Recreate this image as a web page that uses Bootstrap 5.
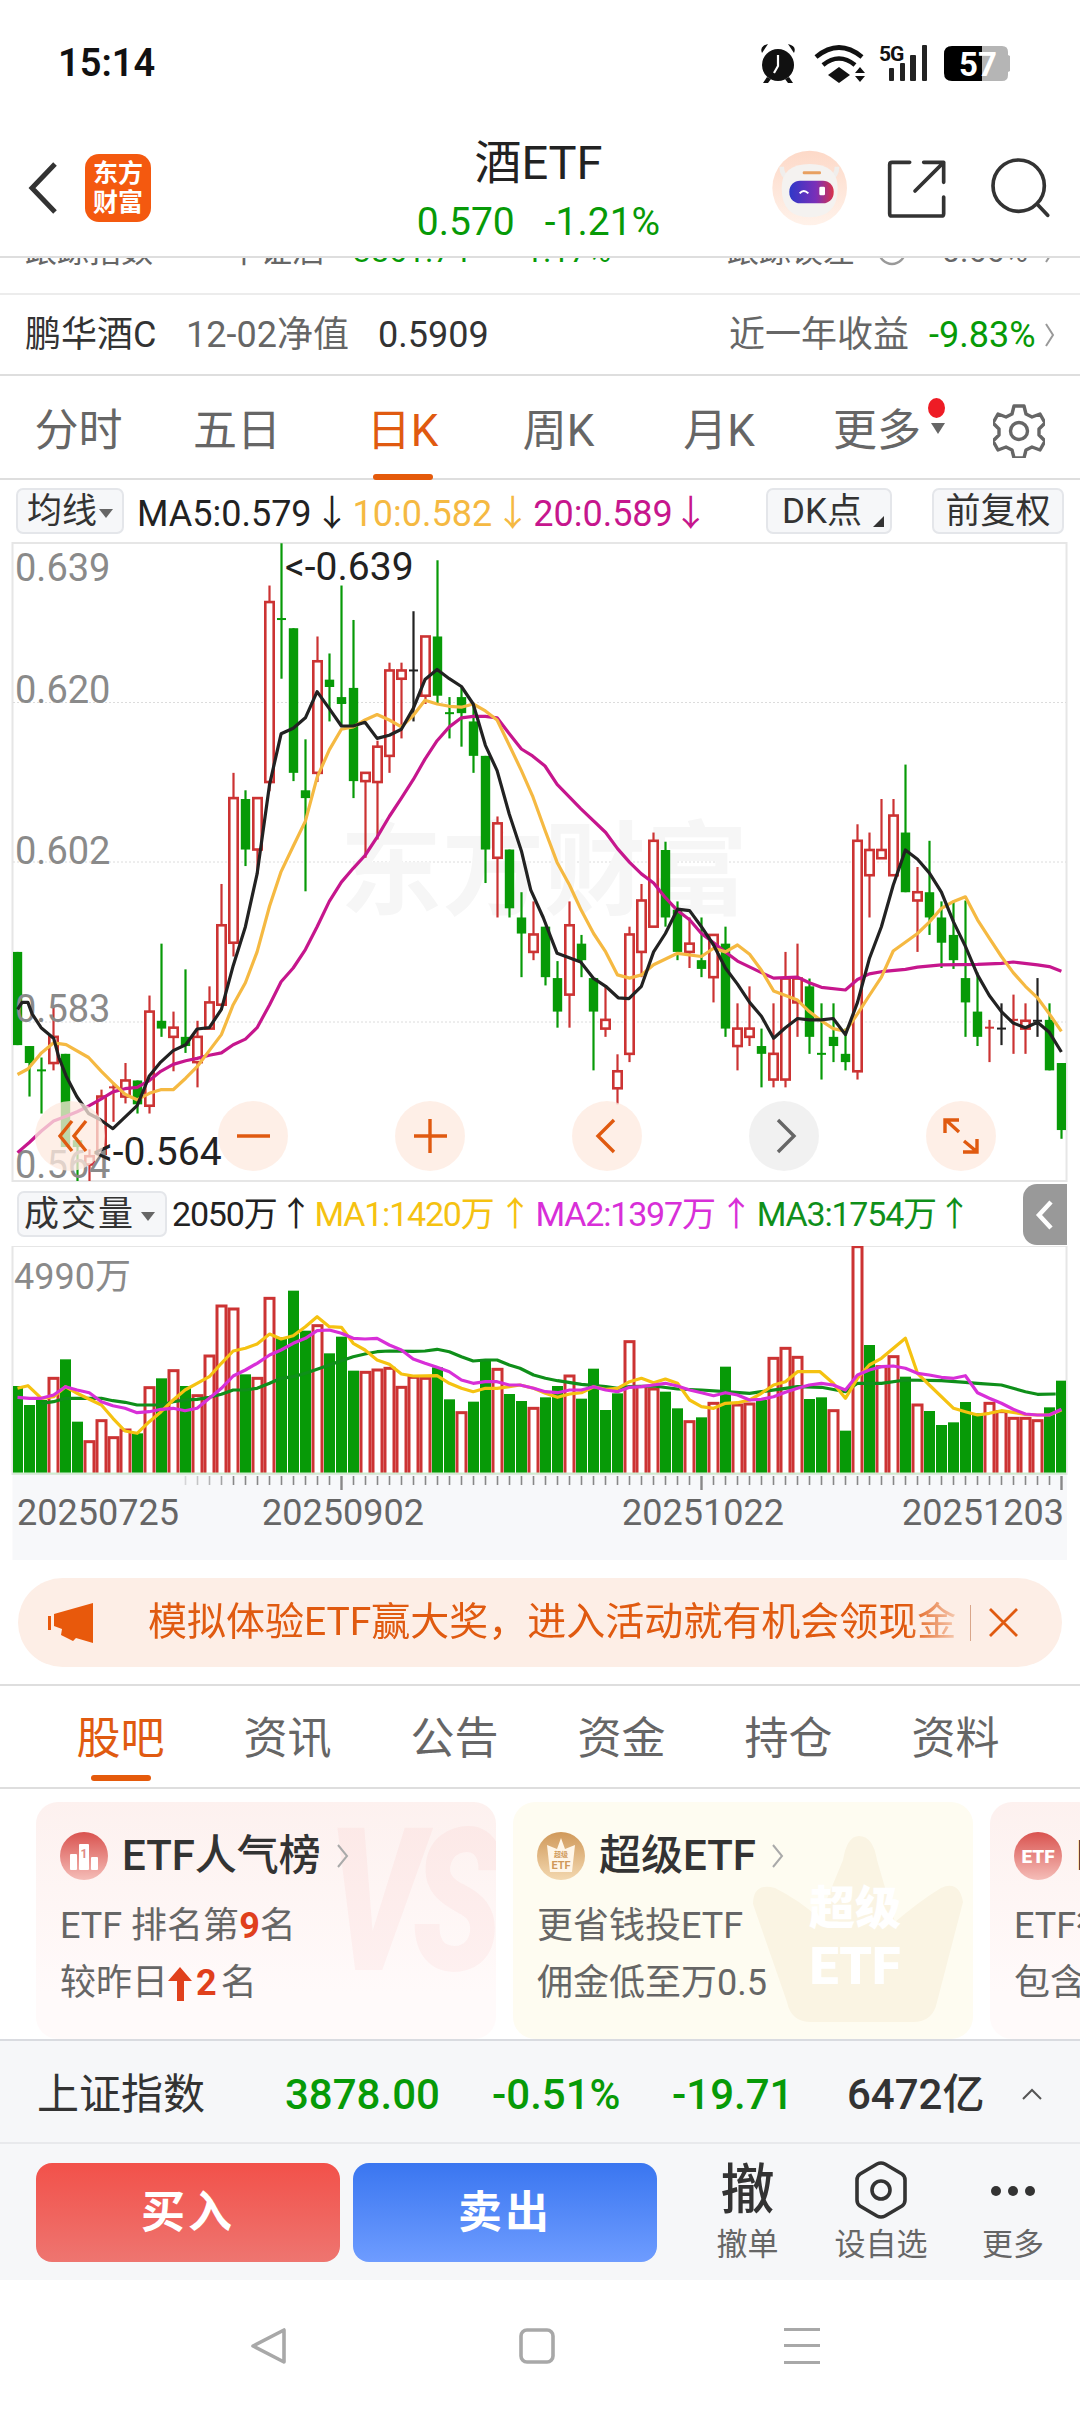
<!DOCTYPE html>
<html lang="zh-CN">
<head>
  <meta charset="UTF-8" />
  <meta name="viewport" content="width=device-width, initial-scale=1.0"/>
  <title>酒ETF</title>
  <link href="https://cdn.jsdelivr.net/npm/bootstrap@5.3.0/dist/css/bootstrap.min.css" rel="stylesheet">
  <style>
    body { margin: 0; background: #fff; font-family: Roboto, "Noto Sans CJK SC", sans-serif; color: #333; }
    .phone { width: 1080px; height: 2412px; overflow: hidden; background: #fff; }
    svg { display: block; }
    .up-green { color: #079a07; }
    .txt-orange { color: #e05a10; }

    .statusbar { height: 120px; padding: 5px 70px 0 58px; }
    .clock { font-size: 38px; font-weight: 600; color: #111; line-height: 1; }

    .topbar { height: 136px; position: relative; z-index: 2; background: #fff; padding: 0 30px 0 27px; }
    .backarrow { margin-right: 26px; }
    .applogo { width: 66px; height: 68px; border-radius: 14px; background: #f4590f; color: #fff; font-size: 25px; font-weight: 700; line-height: 29px; text-align: center; padding-top: 5px; }
    .topside { width: 300px; }
    .toptitle { font-size: 47px; line-height: 56px; color: #222; margin-top: 2px; }
    .topsub { font-size: 39px; line-height: 44px; margin-top: 9px; }
    .topsub span + span { margin-left: 30px; }
    .share-ic { margin-left: 40px; }
    .search-ic { margin-left: 43px; }

    .cutrow { height: 37px; overflow: hidden; border-top: 2px solid #dedede; font-size: 32px; color: #666; padding: 0 25px; }
    .cutinner { margin-top: -27px; line-height: 40px; white-space: nowrap; }
    .navrow { height: 83px; border-top: 2px solid #ececec; border-bottom: 2px solid #dedede; padding: 0 25px; font-size: 36px; white-space: nowrap; }
    .grey-txt { color: #666; }
    .gt { width: 10px; height: 26px; }

    .periodrow { height: 104px; display: grid; grid-template-columns: 157px 160px 171px 141px 180px 136px 135px; border-bottom: 2px solid #dedede; font-size: 44px; color: #666; }
    .periodtab { position: relative; text-align: center; line-height: 110px; }
    .periodtab.on { color: #e05a10; }
    .periodtab.on::after, .subtab.on::after { content: ""; position: absolute; left: 50%; margin-left: -30px; bottom: 6px; width: 60px; height: 6px; border-radius: 3px; background: #e55a0b; }
    .reddot { position: absolute; top: 22px; left: 119px; width: 17px; height: 20px; border-radius: 50%; background: #ee1c25; }
    .morecaret { position: absolute; top: 47px; left: 122px; width: 0; height: 0; border-left: 7px solid transparent; border-right: 7px solid transparent; border-top: 11px solid #666; }

    .marow { height: 62px; padding: 0 16px; font-size: 36px; white-space: nowrap; }
    .matxt { margin-top: 5px; }
    .chipbtn { height: 46px; background: #f6f7f9; border: 2px solid #e4e6ea; border-radius: 7px; font-size: 35px; color: #333; line-height: 43px; text-align: center; position: relative; }
    .caretdown { display: inline-block; width: 0; height: 0; border-left: 7px solid transparent; border-right: 7px solid transparent; border-top: 9px solid #666; vertical-align: middle; margin-left: 2px; }
    .cornertri { position: absolute; right: 6px; bottom: 5px; width: 0; height: 0; border-left: 11px solid transparent; border-bottom: 11px solid #333; }
    .c-ma10 { color: #f5b942; }
    .c-ma20 { color: #c6168d; }
    .volrow { height: 64px; padding: 0 13px 0 17px; font-size: 34px; letter-spacing: -1.2px; white-space: nowrap; position: relative; }
    .c-v1 { color: #f5c211; }
    .c-v2 { color: #d82fd8; }
    .c-v3 { color: #0f8f1a; }
    .collapse-tab { position: absolute; right: 13px; top: 2px; width: 44px; height: 61px; background: #999; border-radius: 14px 0 0 14px; }
    .ax-label { font-family: Roboto, sans-serif; font-size: 38px; fill: #8a8a8a; }
    .hl-label { font-family: Roboto, sans-serif; font-size: 39px; fill: #222; }

    .noticewrap { padding: 18px 18px 17px; border-bottom: 2px solid #dedede; }
    .noticebar { height: 89px; border-radius: 45px; background: #fdeee6; padding: 0 39px 0 30px; color: #e05a10; font-size: 39px; white-space: nowrap; }
    .noticetxt { width: 808px; margin-left: 55px; overflow: hidden; -webkit-mask-image: linear-gradient(90deg, #000 94%, rgba(0,0,0,.25)); mask-image: linear-gradient(90deg, #000 94%, rgba(0,0,0,.25)); }
    .noticesep { width: 1px; height: 36px; background: #d9a68a; margin: 0 17px 0 14px; }

    .subtabs { height: 103px; padding-left: 37px; border-bottom: 2px solid #dedede; font-size: 44px; color: #666; }
    .subtab { position: relative; width: 167px; text-align: center; line-height: 106px; }
    .subtab.on { color: #e05a10; }

    .promo { height: 237px; margin-top: 13px; padding-left: 36px; gap: 17px; overflow: hidden; }
    .promocard { flex: 0 0 460px; position: relative; overflow: hidden; border-radius: 22px; padding: 30px 24px 0; font-size: 36px; color: #666; white-space: nowrap; }
    .promo-red { background: linear-gradient(180deg, #fdf1ef, #fffafa 80%); }
    .promo-gold { background: #fefcf1; }
    .promo-title { font-size: 42px; font-weight: 500; color: #333; line-height: 48px; margin-bottom: 18px; position: relative; }
    .promo-title svg.ic { margin-right: 14px; }
    .promo-line { position: relative; height: 57px; line-height: 57px; }
    .red-num { color: #e0401c; font-weight: 700; }
    .vs-mark { position: absolute; right: 4px; top: 0; font-size: 200px; font-weight: 900; font-style: italic; line-height: 1; letter-spacing: -14px; color: rgba(232,90,90,.055); transform: scaleX(.74); transform-origin: right top; }
    .crownmark { position: absolute; left: 234px; top: 30px; }

    .indexbar { height: 105px; background: #f6f7f9; border-top: 2px solid #d9dbe0; border-bottom: 2px solid #e8e9ec; padding: 5px 37px 0; font-size: 42px; white-space: nowrap; }
    .idx-name { font-size: 42px; color: #333; width: 248px; }
    .idx-val { font-weight: 500; }
    .tradebar { height: 136px; background: #f6f7f9; padding: 19px 0 0 36px; }
    .tradebtn { width: 304px; height: 99px; border: 0; border-radius: 16px; color: #fff; font-size: 44px; font-weight: 700; padding: 0; letter-spacing: 3px; }
    .btn-buy { background: linear-gradient(180deg, #f2514a, #ee7570); margin-right: 13px; }
    .btn-sell { background: linear-gradient(180deg, #3a76f0, #6e9cff); }
    .toolcell { text-align: center; color: #666; font-size: 31px; line-height: 38px; position: relative; margin-top: -2px; }
    .toolicon { height: 60px; margin-bottom: 5px; font-size: 54px; color: #333; line-height: 60px; font-weight: 500; }
    .navkeys { height: 132px; padding-top: 48px; background: #fff; }
  </style>
</head>
<body>
<div class="phone d-flex flex-column">

  <div class="statusbar d-flex justify-content-between align-items-center flex-shrink-0">
    <div class="clock">15:14</div>
    <svg width="252" height="42" viewBox="758 41 252 42">
      <g fill="#111">
        <circle cx="778" cy="64" r="16"/>
        <path d="M762 52q-3-7 6-9zM794 52q3-7-6-9z"/>
        <path d="M767 76l-4 6h5l3-4zM789 76l4 6h-5l-3-4z"/>
      </g>
      <path d="M778 54v11l-4 7" stroke="#fff" stroke-width="2.2" fill="none"/>
      <g fill="none" stroke="#111" stroke-width="4.6">
        <path d="M816 56q23-19 46 0"/>
        <path d="M823 64q16-13 32 0"/>
      </g>
      <path d="M839 66l11 8-11 8-11-8z" fill="#111"/>
      <path d="M860 66l5 6h-10zM860 81l5-6h-10z" fill="#111"/>
      <text x="879" y="60" font-family="Roboto, sans-serif" font-size="21" font-weight="700" letter-spacing="-1" fill="#111">5G</text>
      <g fill="#222">
        <rect x="889" y="67" width="5" height="13" rx="1"/>
        <rect x="900" y="62" width="5" height="18" rx="1"/>
        <rect x="910" y="54" width="6" height="26" rx="1"/>
        <rect x="922" y="44" width="5" height="36" rx="1"/>
      </g>
      <path d="M982 45h20q6 0 6 6v3l2 1v15l-2 1v3q0 6-6 6h-20z" fill="#b5b5b5"/>
      <path d="M982 45h-30q-8 0-8 8v19q0 8 8 8h30z" fill="#000"/>
      <text x="959" y="75" font-family="Roboto, sans-serif" font-size="33" font-weight="700" fill="#fff">57</text>
    </svg>
  </div>

  <div class="topbar d-flex align-items-center flex-shrink-0">
    <div class="topside d-flex align-items-center">
      <svg class="backarrow" width="32" height="54" viewBox="0 0 32 54"><path d="M28 3 5 27l23 24" fill="none" stroke="#333" stroke-width="5"/></svg>
      <div class="applogo">东方<br>财富</div>
    </div>
    <div class="flex-grow-1 text-center">
      <div class="toptitle">酒ETF</div>
      <div class="topsub up-green"><span>0.570</span><span>-1.21%</span></div>
    </div>
    <div class="topside d-flex align-items-center justify-content-end">
      <svg width="76" height="76" viewBox="30 36 228 228">
        <defs>
          <linearGradient id="avBg" x1="0" y1="0" x2="0" y2="1"><stop offset="0" stop-color="#fdd9c8"/><stop offset="1" stop-color="#fff2ea"/></linearGradient>
          <linearGradient id="visor" x1="0" y1="0" x2="1" y2="0"><stop offset="0" stop-color="#2f38c8"/><stop offset=".6" stop-color="#7a2fb8"/><stop offset="1" stop-color="#d8324a"/></linearGradient>
        </defs>
        <circle cx="146" cy="150" r="112" fill="url(#avBg)"/>
        <path d="M62 86q0 28 24 36M228 86q0 28-24 36" stroke="#f0eeec" stroke-width="14" fill="none"/>
        <path d="M62 150q0-72 84-72t84 72q0 88-84 88t-84-88z" fill="#f4f2f0"/>
        <rect x="125" y="100" width="55" height="9" rx="4" fill="#e8a060"/>
        <rect x="85" y="128" width="133" height="68" rx="32" fill="url(#visor)"/>
        <path d="M116 166q12-14 26 0" stroke="#fff" stroke-width="6" fill="none"/>
        <rect x="175" y="146" width="17" height="26" rx="4" fill="#fff"/>
      </svg>
      <svg class="share-ic" width="60" height="60" viewBox="380 55 180 180">
        <path d="M448 68H395q-7 0-7 7v147q0 7 7 7h148q7 0 7-7v-50M464 154l86-86M490 68h60v60" fill="none" stroke="#333" stroke-width="11" stroke-linecap="round" stroke-linejoin="round"/>
      </svg>
      <svg class="search-ic" width="60" height="60" viewBox="692 55 180 180">
        <circle cx="778" cy="138" r="77" fill="none" stroke="#333" stroke-width="11"/>
        <path d="M836 196l29 31" stroke="#333" stroke-width="11" stroke-linecap="round"/>
      </svg>
    </div>
  </div>

  <div class="cutrow flex-shrink-0">
    <div class="cutinner d-flex align-items-center">
      <span style="width:203px">跟踪指数</span><span style="width:125px">中证酒</span>
      <span class="up-green" style="width:172px">3861.74</span><span class="up-green" style="width:202px">1.17%</span>
      <span style="width:150px">跟踪误差</span>
      <svg width="30" height="30" viewBox="0 0 30 30" style="margin-right:35px"><circle cx="15" cy="15" r="13" fill="none" stroke="#999" stroke-width="2.4"/><path d="M15 13v9" stroke="#999" stroke-width="2.4"/></svg>
      <span style="width:103px">0.66%</span>
      <svg class="gt" viewBox="0 0 10 26"><path d="M1 2l7 11-7 11" stroke="#999" stroke-width="2" fill="none"/></svg>
    </div>
  </div>
  <div class="navrow d-flex align-items-center flex-shrink-0">
    <span style="width:161px;color:#333">鹏华酒C</span>
    <span class="grey-txt" style="width:192px">12-02净值</span>
    <span style="width:351px;color:#333">0.5909</span>
    <span class="grey-txt" style="width:200px">近一年收益</span>
    <span class="up-green" style="width:116px">-9.83%</span>
    <svg class="gt" viewBox="0 0 10 26"><path d="M1 2l7 11-7 11" stroke="#999" stroke-width="2" fill="none"/></svg>
  </div>

  <div class="periodrow flex-shrink-0">
    <div class="periodtab">分时</div>
    <div class="periodtab">五日</div>
    <div class="periodtab on">日K</div>
    <div class="periodtab">周K</div>
    <div class="periodtab">月K</div>
    <div class="periodtab">更多<span class="reddot"></span><span class="morecaret"></span></div>
    <div class="d-flex align-items-center" style="padding-left:48px">
      <svg width="52" height="54" viewBox="0 0 52 54" fill="none" stroke="#666" stroke-width="3.4" stroke-linejoin="round">
        <path d="M21 2h10l2 8 6 3 8-3 5 9-6 6v6l6 6-5 9-8-3-6 3-2 8H21l-2-8-6-3-8 3-5-9 6-6v-6l-6-6 5-9 8 3 6-3z"/>
        <circle cx="26" cy="27" r="8.5"/>
      </svg>
    </div>
  </div>

  <div class="marow d-flex align-items-center flex-shrink-0">
    <div class="chipbtn" style="width:108px">均线<span class="caretdown"></span></div>
    <span class="matxt" style="margin-left:13px;color:#222">MA5:0.579</span><span class="matxt" style="width:41px;text-align:center;color:#222">↓</span>
    <span class="matxt c-ma10">10:0.582</span><span class="matxt c-ma10" style="width:41px;text-align:center">↓</span>
    <span class="matxt c-ma20">20:0.589</span><span class="matxt c-ma20" style="width:36px;text-align:center">↓</span>
    <div class="chipbtn ms-auto" style="width:126px;padding-right:14px">DK点<span class="cornertri"></span></div>
    <div class="chipbtn" style="width:132px;margin-left:40px">前复权</div>
  </div>

  <svg id="priceChart" class="flex-shrink-0" width="1080" height="640" viewBox="0 543 1080 640">
    <defs><clipPath id="pclip"><rect x="13" y="544" width="1053" height="638"/></clipPath></defs>
    <rect x="12.5" y="544" width="1054" height="638" fill="#fff" stroke="#e6e6e6" stroke-width="2"/>
    <g stroke="#dcdcdc" stroke-width="1" stroke-dasharray="2 2">
      <path d="M13 703.5H1066M13 863H1066M13 1023H1066"/>
    </g>
    <text x="340" y="908" font-family="'Noto Sans CJK SC', sans-serif" font-size="102" font-weight="700" fill="#f6f6f6">东方财富</text>
    <g id="candles" clip-path="url(#pclip)"></g>
    <g class="ax-label">
      <text x="15" y="582">0.639</text>
      <text x="15" y="704">0.620</text>
      <text x="15" y="865">0.602</text>
      <text x="15" y="1023">0.583</text>
      <text x="15" y="1179">0.564</text>
    </g>
    <g class="hl-label">
      <text x="285" y="581">&lt;-0.639</text>
      <text x="93" y="1166">&lt;-0.564</text>
    </g>
    <g id="maLines" clip-path="url(#pclip)" fill="none" stroke-width="3.2" stroke-linejoin="round"></g>
    <g>
      <circle cx="70" cy="1137" r="35" fill="#fde9df" fill-opacity=".75"/>
      <circle cx="253" cy="1137" r="35" fill="#fde9df" fill-opacity=".75"/>
      <circle cx="430" cy="1137" r="35" fill="#fde9df" fill-opacity=".75"/>
      <circle cx="607" cy="1137" r="35" fill="#fde9df" fill-opacity=".75"/>
      <circle cx="784" cy="1137" r="35" fill="#efefef" fill-opacity=".85"/>
      <circle cx="961" cy="1137" r="35" fill="#fde9df" fill-opacity=".75"/>
      <g fill="none" stroke="#e05a10" stroke-width="3.4">
        <path d="M72 1122l-12 15 12 15M86 1122l-12 15 12 15"/>
        <path d="M237 1137h33"/>
        <path d="M414 1137h33M430 1120v34"/>
        <path d="M614 1121l-16 16 16 16"/>
        <path d="M947 1122l12 11M945 1134v-13h14M976 1152l-12-10M977 1140v13h-14"/>
      </g>
      <path d="M778 1121l16 16-16 16" fill="none" stroke="#666" stroke-width="3.4"/>
    </g>
  </svg>

  <div class="volrow d-flex align-items-center flex-shrink-0">
    <div class="chipbtn" style="width:150px;letter-spacing:2px;padding-right:8px;text-align:left;padding-left:5px">成交量<span class="caretdown" style="margin-left:6px"></span></div>
    <span style="margin-left:5px;color:#222">2050万</span><span style="width:38px;text-align:center;color:#222">↑</span>
    <span class="c-v1">MA1:1420万</span><span class="c-v1" style="width:42px;text-align:center">↑</span>
    <span class="c-v2">MA2:1397万</span><span class="c-v2" style="width:42px;text-align:center">↑</span>
    <span class="c-v3">MA3:1754万</span><span class="c-v3" style="width:36px;text-align:center">↑</span>
    <div class="collapse-tab d-flex align-items-center justify-content-center">
      <svg width="20" height="32" viewBox="0 0 20 32"><path d="M16 3 4 16l12 13" fill="none" stroke="#fff" stroke-width="4.5"/></svg>
    </div>
  </div>

  <svg id="volChart" class="flex-shrink-0" width="1080" height="314" viewBox="0 1246 1080 314">
    <defs><clipPath id="vclip"><rect x="13" y="1246" width="1053" height="228"/></clipPath></defs>
    <rect x="12.5" y="1474" width="1054.5" height="86" fill="#f7f8fa"/>
    <rect x="12.5" y="1246" width="1054" height="228" fill="#fff" stroke="#e6e6e6" stroke-width="2"/>
    <text x="14" y="1289" font-family="Roboto, 'Noto Sans CJK SC', sans-serif" font-size="36" fill="#8a8a8a">4990万</text>
    <g id="volBars" clip-path="url(#vclip)"></g>
    <path d="M13 1473.5H1066" stroke="#cfeccf" stroke-width="2"/>
    <g id="volLines" clip-path="url(#vclip)" fill="none" stroke-width="3.2" stroke-linejoin="round"></g>
    <g id="ticks" stroke="#888" stroke-width="1.6"></g>
    <g font-family="Roboto, sans-serif" font-size="36" fill="#666">
      <text x="17" y="1525">20250725</text>
      <text x="262" y="1525">20250902</text>
      <text x="622" y="1525">20251022</text>
      <text x="902" y="1525">20251203</text>
    </g>
  </svg>

  <div class="noticewrap flex-shrink-0">
    <div class="noticebar d-flex align-items-center">
      <svg width="45" height="40" viewBox="0 0 45 40" fill="#e8590c"><rect x="0" y="13" width="3" height="14"/><path d="M6 11 45 0v40L28 35l-3 3-12-6 1-6-8-3z"/></svg>
      <div class="noticetxt">模拟体验ETF赢大奖，进入活动就有机会领现金</div>
      <span class="noticesep"></span>
      <svg width="31" height="31" viewBox="0 0 31 31"><path d="M2 2l27 27M29 2 2 29" stroke="#e05a10" stroke-width="2.8"/></svg>
    </div>
  </div>

  <div class="subtabs d-flex flex-shrink-0">
    <div class="subtab on">股吧</div>
    <div class="subtab">资讯</div>
    <div class="subtab">公告</div>
    <div class="subtab">资金</div>
    <div class="subtab">持仓</div>
    <div class="subtab">资料</div>
  </div>

  <div class="promo d-flex flex-shrink-0">
    <div class="promocard promo-red">
      <div class="vs-mark">VS</div>
      <div class="promo-title d-flex align-items-center">
        <svg class="ic" width="48" height="48" viewBox="0 0 48 48">
          <defs><linearGradient id="redIc" x1="0" y1="0" x2="0" y2="1"><stop offset="0" stop-color="#d9534f"/><stop offset="1" stop-color="#f5bdb8"/></linearGradient></defs>
          <circle cx="24" cy="24" r="24" fill="url(#redIc)"/>
          <g fill="#fff"><rect x="10" y="22" width="7" height="16" rx="1"/><rect x="19" y="12" width="10" height="26" rx="1"/><rect x="31" y="25" width="7" height="13" rx="1"/></g>
          <text x="24" y="26" text-anchor="middle" font-size="12" font-weight="700" font-family="Roboto, sans-serif" fill="#e08a85">1</text>
        </svg>
        ETF人气榜
        <svg class="ms-3" width="12" height="26" viewBox="0 0 12 26"><path d="M1 2l9 11-9 11" stroke="#aaa" stroke-width="2" fill="none"/></svg>
      </div>
      <div class="promo-line">ETF 排名第<span class="red-num">9</span>名</div>
      <div class="promo-line d-flex align-items-center">较昨日<svg width="24" height="34" viewBox="0 0 24 34"><path d="M12 0 24 14h-8v20H9V14H0z" fill="#e0401c"/></svg><span class="red-num ms-1 me-1">2</span>名</div>
    </div>
    <div class="promocard promo-gold">
      <svg class="crownmark" width="222" height="190" viewBox="0 0 222 190">
        <path d="M112 4q14 0 18 24l18 62q26-22 46-34 18-8 22 14l-26 100q-4 20-24 20H64q-20 0-24-20L6 72q0-22 22-16 24 12 44 30l24-58q4-24 16-24z" fill="#faf4e3"/>
        <g fill="#fff" font-family="Roboto, 'Noto Sans CJK SC', sans-serif" font-weight="900" text-anchor="middle">
          <text x="108" y="92" font-size="46">超级</text>
          <text x="108" y="152" font-size="52">ETF</text>
        </g>
      </svg>
      <div class="promo-title d-flex align-items-center">
        <svg class="ic" width="48" height="48" viewBox="0 0 48 48">
          <defs><linearGradient id="goldIc" x1="0" y1="0" x2="0" y2="1"><stop offset="0" stop-color="#d0995a"/><stop offset="1" stop-color="#f3d8b0"/></linearGradient></defs>
          <circle cx="24" cy="24" r="24" fill="url(#goldIc)"/>
          <path d="M24 6l4 11 10-4-3 27H13L10 13l10 4z" fill="#fff6e8"/>
          <text x="24" y="37" text-anchor="middle" font-size="11" font-weight="700" font-family="Roboto, sans-serif" fill="#d0995a">ETF</text>
          <text x="24" y="25" text-anchor="middle" font-size="7" font-weight="700" font-family="'Noto Sans CJK SC', sans-serif" fill="#d0995a">超级</text>
        </svg>
        超级ETF
        <svg class="ms-3" width="12" height="26" viewBox="0 0 12 26"><path d="M1 2l9 11-9 11" stroke="#aaa" stroke-width="2" fill="none"/></svg>
      </div>
      <div class="promo-line">更省钱投ETF</div>
      <div class="promo-line">佣金低至万0.5</div>
    </div>
    <div class="promocard promo-red">
      <div class="promo-title d-flex align-items-center">
        <svg class="ic" width="48" height="48" viewBox="0 0 48 48">
          <circle cx="24" cy="24" r="24" fill="url(#redIc)"/>
          <text x="24" y="31" text-anchor="middle" font-size="19" font-weight="900" font-family="Roboto, sans-serif" fill="#fff">ETF</text>
        </svg>
        ETF
      </div>
      <div class="promo-line">ETF行业</div>
      <div class="promo-line">包含</div>
    </div>
  </div>

  <div class="indexbar d-flex align-items-center flex-shrink-0">
    <span class="idx-name">上证指数</span>
    <span class="idx-val up-green" style="width:207px">3878.00</span>
    <span class="idx-val up-green" style="width:180px">-0.51%</span>
    <span class="idx-val up-green" style="width:175px">-19.71</span>
    <span class="idx-val" style="width:174px;color:#333">6472亿</span>
    <svg width="22" height="12" viewBox="0 0 22 12"><path d="M2 11 11 2l9 9" stroke="#555" stroke-width="2" fill="none"/></svg>
  </div>

  <div class="tradebar d-flex flex-shrink-0">
    <button class="btn tradebtn btn-buy">买入</button>
    <button class="btn tradebtn btn-sell">卖出</button>
    <div class="toolcell" style="margin-left:59px;width:63px">
      <div class="toolicon">撤</div>撤单
    </div>
    <div class="toolcell" style="margin-left:53px;width:98px">
      <div class="toolicon d-flex justify-content-center">
        <svg width="52" height="58" viewBox="0 0 52 58" fill="none" stroke="#333" stroke-width="3.6" stroke-linejoin="round"><path d="M22 3q4-2 8 0l17 10q3 2 3 6v20q0 4-3 6L30 55q-4 2-8 0L5 45q-3-2-3-6V19q0-4 3-6z"/><circle cx="26" cy="29" r="9"/></svg>
      </div>设自选
    </div>
    <div class="toolcell" style="margin-left:52px;width:62px">
      <div class="toolicon d-flex justify-content-center align-items-center">
        <svg width="46" height="12" viewBox="0 0 46 12" fill="#333"><circle cx="6" cy="6" r="5"/><circle cx="23" cy="6" r="5"/><circle cx="40" cy="6" r="5"/></svg>
      </div>更多
    </div>
  </div>

  <div class="navkeys d-flex flex-shrink-0" style="padding-left:251px">
    <svg width="35" height="36" viewBox="0 0 35 36" fill="none" stroke="#a8a8a8" stroke-width="3.6" stroke-linejoin="round"><path d="M33 2v32L2 18z"/></svg>
    <svg width="36" height="36" viewBox="0 0 36 36" fill="none" stroke="#a8a8a8" stroke-width="3.6" style="margin-left:233px"><rect x="2" y="2" width="32" height="32" rx="6"/></svg>
    <svg width="36" height="36" viewBox="0 0 36 36" fill="#a8a8a8" style="margin-left:229px"><rect y="0" width="36" height="3"/><rect y="16" width="36" height="3"/><rect y="33" width="36" height="3"/></svg>
  </div>
</div>

<script>
  const NS = 'http://www.w3.org/2000/svg';
  const RED = '#cc3333', GREEN = '#079a07', BLACK = '#222';
  const slotX = i => 17.5 + 12 * i;
  const py = z => 480 + z / 2.178;
  const vy = z => 1170 + z / 3;

  function add(parent, tag, attrs) {
    const el = document.createElementNS(NS, tag);
    Object.keys(attrs).forEach(k => el.setAttribute(k, attrs[k]));
    parent.appendChild(el);
    return el;
  }

  // kind, high, top, bottom, low (y read off the crop, converted by py)
  const candles = [
    ['g',1030,1030,1233,1233],['g',1235,1235,1272,1345],['g',1260,1288,1288,1382],['r',1150,1215,1272,1288],
    ['g',1252,1252,1455,1455],['g',1440,1440,1455,1535],['r',1460,1475,1493,1530],['r',1330,1345,1470,1470],
    ['r',1315,1325,1325,1400],['r',1272,1310,1345,1360],['g',1310,1310,1362,1382],['r',1125,1160,1365,1382],
    ['g',1012,1180,1197,1215],['r',1160,1195,1215,1290],['g',1068,1215,1235,1250],['r',1180,1215,1270,1325],
    ['r',1105,1140,1197,1197],['r',882,972,1145,1145],['r',640,695,1010,1040],['g',678,697,807,843],
    ['r',695,695,807,860],['r',232,268,660,680],['g',140,305,305,435],['g',325,325,640,658],
    ['g',567,678,695,898],['r',343,397,640,660],['g',380,437,453,528],['g',232,475,490,540],
    ['g',307,455,658,695],['r',640,640,658,825],['r',570,583,660,785],['r',400,417,603,640],
    ['r',400,417,435,565],['k',288,417,417,528],['r',343,343,472,490],['g',177,343,472,490],
    ['g',475,510,510,565],['g',455,475,510,583],['g',490,528,603,640],['g',603,603,807,880],
    ['r',735,750,825,955],['g',807,807,935,955],['g',900,955,990,1085],['r',920,992,1030,1048],
    ['g',975,975,1085,1103],['g',1050,1087,1160,1195],['r',920,972,1123,1195],['g',993,1012,1048,1085],
    ['g',1087,1087,1160,1288],['r',1105,1178,1197,1215],['r',1253,1290,1327,1362],['r',975,992,1252,1270],
    ['r',882,918,1030,1085],['r',770,788,975,975],['g',790,808,955,975],['g',920,938,1030,1048],
    ['r',955,1012,1030,1065],['g',955,1048,1067,1085],['r',993,993,1085,1140],['g',975,1012,1197,1215],
    ['r',1142,1197,1235,1288],['r',1105,1197,1215,1235],['g',1197,1235,1252,1325],['r',1142,1252,1308,1325],
    ['r',1030,1088,1308,1325],['r',1012,1088,1140,1215],['g',1088,1105,1215,1252],['g',1142,1252,1252,1308],
    ['g',1142,1215,1235,1270],['g',1197,1252,1270,1288],['r',752,788,1290,1308],['r',770,808,863,955],
    ['r',697,808,826,826],['r',697,733,863,863],['g',622,770,900,900],['r',845,900,918,1030],
    ['g',788,900,955,993],['g',920,955,1010,1065],['g',920,993,1048,1067],['g',918,1087,1140,1215],
    ['g',1075,1160,1215,1235],['r',1178,1195,1195,1270],['k',1142,1197,1197,1233],['r',1123,1178,1178,1252],
    ['r',1142,1180,1197,1252],['k',1087,1180,1180,1215],['g',1142,1178,1288,1288],['g',1272,1272,1418,1437]
  ];

  const gc = document.getElementById('candles');
  candles.forEach((c, i) => {
    const x = slotX(i), col = c[0] === 'r' ? RED : c[0] === 'g' ? GREEN : BLACK;
    add(gc, 'line', { x1: x, x2: x, y1: py(c[1]), y2: py(c[4]), stroke: col, 'stroke-width': 2.2 });
    const h = py(c[3]) - py(c[2]);
    if (h < 2) {
      add(gc, 'line', { x1: x - 4.5, x2: x + 4.5, y1: py(c[2]), y2: py(c[2]), stroke: col, 'stroke-width': 2 });
    } else if (c[0] === 'r') {
      add(gc, 'rect', { x: x - 4.2, y: py(c[2]), width: 8.4, height: h, fill: '#fff', stroke: col, 'stroke-width': 2.6 });
    } else {
      add(gc, 'rect', { x: x - 4.7, y: py(c[2]), width: 9.4, height: h, fill: col });
    }
  });

  // each line: points read off the left crop, then off the right crop (x + 520 after scaling)
  function drawLine(parent, color, left, right, yFn) {
    const pts = [];
    for (let i = 0; i < left.length; i += 2) pts.push((left[i] / 2.8).toFixed(1) + ',' + yFn(left[i + 1]).toFixed(1));
    for (let i = 0; i < right.length; i += 2) pts.push((right[i] / 2.8 + 520).toFixed(1) + ',' + yFn(right[i + 1]).toFixed(1));
    add(parent, 'polyline', { points: pts.join(' '), stroke: color });
  }

  const maG = document.getElementById('maLines');
  drawLine(maG, '#c6168d',
    [49,1467,82,1445,116,1420,150,1398,185,1388,216,1378,250,1365,284,1350,316,1335,350,1328,384,1325,418,1310,450,1290,485,1275,520,1267,552,1262,586,1255,620,1250,653,1232,687,1220,720,1195,755,1145,787,1095,821,1065,855,1025,888,975,922,920,956,878,989,848,1022,820,1056,780,1090,735,1124,695,1157,655,1190,610,1224,570,1258,540,1292,520,1325,517,1359,517,1392,520,1426,555],
    [4,588,35,603,70,625,104,665,170,718,240,770,273,805,307,835,340,860,374,880,407,912,441,940,475,960,508,990,542,1010,575,1030,609,1050,676,1075,710,1087,777,1085,810,1097,844,1107,911,1113,945,1090,978,1078,1012,1073,1079,1068,1113,1063,1180,1058,1281,1057,1348,1055,1381,1052,1449,1058,1482,1062,1516,1072], py);
  drawLine(maG, '#f5b942',
    [49,1297,78,1285,116,1250,150,1228,185,1232,248,1260,284,1290,316,1315,350,1340,384,1352,418,1338,450,1330,485,1330,520,1305,552,1280,586,1245,620,1210,653,1145,687,1097,720,1030,755,930,787,855,821,800,855,745,888,650,922,590,956,545,989,540,1022,525,1056,513,1090,525,1124,540,1157,515,1190,482,1224,490,1258,495,1292,497,1325,490,1359,505,1392,525,1426,580],
    [4,635,35,690,70,765,104,835,139,885,172,940,206,990,240,1030,273,1080,307,1087,340,1080,374,1058,441,1033,508,1040,542,1022,575,1030,609,1015,643,1035,676,1070,710,1115,777,1135,810,1160,844,1180,877,1197,911,1203,945,1165,978,1125,1012,1085,1045,1028,1113,990,1146,965,1180,935,1214,920,1247,910,1281,960,1314,1000,1348,1040,1381,1075,1415,1105,1449,1130,1482,1165,1516,1203], py);
  drawLine(maG, '#222',
    [49,1155,62,1140,78,1140,90,1165,115,1195,150,1218,165,1260,185,1300,215,1345,248,1382,280,1395,316,1415,350,1390,384,1365,400,1335,418,1300,450,1270,485,1245,520,1232,552,1198,586,1195,620,1155,653,1060,687,975,720,860,755,665,787,555,821,543,855,520,888,463,922,500,956,538,989,538,1022,530,1056,565,1090,558,1124,545,1157,500,1190,437,1224,415,1258,435,1292,452,1325,490,1359,580,1392,635,1426,730],
    [4,810,30,895,65,955,104,1033,170,1052,205,1087,240,1105,275,1130,305,1132,340,1105,374,1030,407,990,441,937,475,940,508,975,542,1015,575,1065,609,1100,643,1140,676,1170,710,1218,743,1195,777,1175,810,1178,844,1178,877,1175,911,1210,945,1140,978,1045,1012,975,1045,885,1079,808,1113,828,1146,858,1180,900,1214,965,1247,1018,1281,1080,1314,1125,1348,1160,1381,1185,1415,1195,1449,1183,1482,1205,1516,1248], py);

  // volume bars: kind, top
  const vols = [
    ['g',648],['g',705],['g',690],['r',625],['g',568],['g',755],['r',815],['r',752],['r',803],['r',780],['g',790],
    ['r',653],['g',625],['r',602],['g',648],['r',677],['r',558],['r',408],['r',417],['g',613],['r',625],['r',385],
    ['g',502],['g',362],['g',482],['r',467],['g',550],['g',500],['g',602],['r',607],['r',600],['r',595],['r',652],
    ['r',622],['r',625],['g',592],['g',688],['r',728],['g',695],['g',568],['r',598],['g',672],['g',693],['r',715],
    ['g',682],['g',648],['r',618],['g',686],['g',596],['g',720],['g',670],['r',515],['r',650],['r',657],['g',665],
    ['g',715],['r',755],['g',742],['r',700],['g',590],['r',705],['r',702],['g',690],['r',565],['r',535],['r',562],
    ['g',687],['g',682],['r',722],['g',782],['r',230],['g',525],['r',590],['r',560],['g',620],['r',705],['g',723],
    ['g',765],['g',757],['g',696],['g',730],['r',700],['r',725],['r',745],['r',745],['r',752],['g',712],['g',632]
  ];
  const vb = document.getElementById('volBars');
  const base = vy(910);
  vols.forEach((v, i) => {
    const x = slotX(i), t = vy(v[1]);
    if (v[0] === 'r') add(vb, 'rect', { x: x - 4.5, y: t, width: 9, height: base - t + 3, fill: '#fff', stroke: RED, 'stroke-width': 3 });
    else add(vb, 'rect', { x: x - 5.5, y: t, width: 11, height: base - t, fill: GREEN });
  });

  const vl = document.getElementById('volLines');
  drawLine(vl, '#0f8f1a',
    [116,700,150,695,183,685,250,685,284,685,316,692,350,697,384,705,418,705,451,705,485,695,518,690,552,688,586,682,620,673,653,660,687,660,720,655,755,640,787,625,821,620,855,610,888,598,922,585,956,572,989,560,1022,552,1056,545,1090,543,1157,544,1190,543,1224,538,1258,545,1292,560,1325,573,1359,570,1392,570,1426,585],
    [0,595,38,615,71,625,105,632,172,643,240,650,273,655,307,650,374,648,441,657,508,660,575,665,643,670,676,665,743,655,777,650,844,652,911,665,945,640,1012,640,1079,630,1180,632,1247,637,1281,640,1348,645,1415,665,1449,673,1500,672], vy);
  drawLine(vl, '#f5c211',
    [49,655,78,647,116,685,150,680,183,650,216,670,250,688,284,705,316,745,350,783,384,790,418,755,451,725,485,690,518,660,552,640,586,620,620,580,653,543,687,535,720,522,755,492,787,507,821,497,855,470,888,440,922,470,956,472,989,520,1022,540,1056,570,1090,583,1124,612,1157,618,1224,617,1258,640,1292,655,1325,665,1359,655,1392,655,1426,650],
    [0,645,38,655,71,670,105,682,139,672,172,668,206,650,240,658,273,655,307,635,340,625,374,638,407,627,441,640,475,690,508,710,542,715,575,700,609,698,643,690,676,670,710,645,743,635,777,605,840,605,877,640,911,685,945,625,978,585,1012,565,1079,505,1113,610,1146,645,1214,715,1247,725,1281,735,1314,730,1348,722,1415,733,1449,735,1482,735,1516,720], vy);
  drawLine(vl, '#d82fd8',
    [49,682,83,685,116,685,150,675,183,650,216,660,250,668,284,695,316,707,350,715,384,728,418,725,451,718,485,715,518,722,552,715,586,685,620,655,653,618,687,600,720,580,755,555,787,540,821,520,855,505,888,482,922,480,956,490,989,505,1022,507,1056,505,1090,525,1124,540,1157,567,1190,580,1224,592,1258,605,1292,630,1325,640,1359,635,1392,635,1426,645],
    [0,645,38,655,71,665,105,668,139,660,172,660,206,650,240,660,273,665,307,652,340,650,374,645,407,640,441,648,475,660,508,668,542,677,575,668,609,675,643,690,676,688,710,680,743,667,777,655,810,645,844,640,877,645,911,660,945,615,978,600,1012,590,1045,588,1079,595,1113,610,1146,615,1180,622,1214,625,1247,617,1281,668,1314,685,1348,700,1381,718,1415,732,1449,735,1482,735,1516,718], vy);

  const tk = document.getElementById('ticks');
  for (let i = 14; i < 88; i++) {
    const major = i === 27 || i === 57 || i === 87;
    add(tk, 'line', { x1: slotX(i), x2: slotX(i), y1: 1476, y2: major ? 1490 : 1485, opacity: i < 18 ? 0.3 + (i - 14) * 0.15 : 1, 'stroke-width': major ? 2.4 : 1.6 });
  }
</script>
<script src="https://cdn.jsdelivr.net/npm/bootstrap@5.3.0/dist/js/bootstrap.bundle.min.js"></script>
</body>
</html>
